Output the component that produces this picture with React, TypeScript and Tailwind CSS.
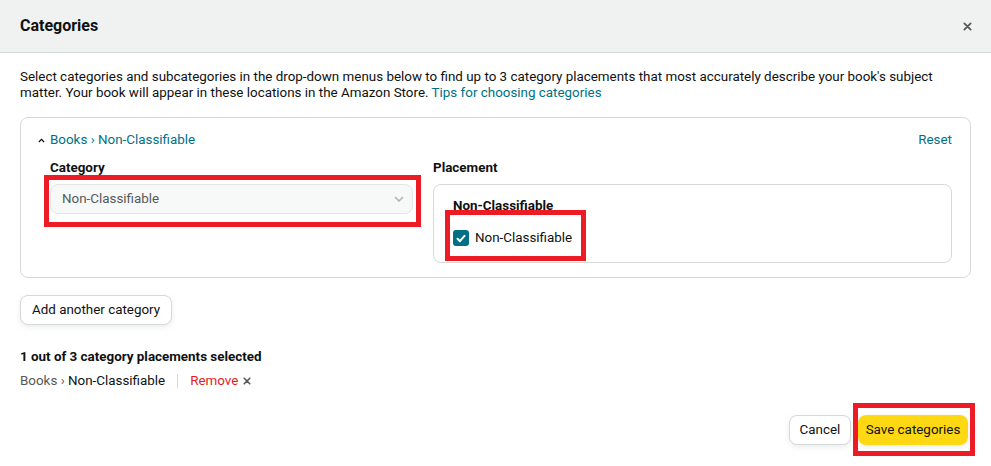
import React from 'react';

function RedBox({ className }: { className: string }) {
  return <div className={`pointer-events-none absolute border-[5px] border-[#ed1c24] ${className}`} />;
}

function XIcon({ className }: { className: string }) {
  return (
    <svg className={className} viewBox="0 0 10 10" fill="none" stroke="currentColor" strokeWidth={2} strokeLinecap="round">
      <path d="M1.5 1.5l7 7M8.5 1.5l-7 7" />
    </svg>
  );
}

export default function App() {
  return (
    <div
      className="relative w-[991px] h-[466px] overflow-hidden bg-white text-[13.4px] leading-4 text-[#0f1111]"
      style={{ fontFamily: 'Roboto, "Liberation Sans", sans-serif' }}
    >
      {/* header */}
      <div className="flex h-[53px] items-center justify-between border-b border-[#d5d9d9] bg-[#f0f2f2] pl-5 pr-[19px]">
        <h1 className="text-[16px] font-bold">Categories</h1>
        <XIcon className="h-[9px] w-[9px] text-[#565959]" />
      </div>

      <div className="px-5 pt-4">
        <p className="text-[#0f1111]">
          Select categories and subcategories in the drop-down menus below to find up to 3 category placements that most accurately describe your book's subject matter. Your book will appear in these locations in the Amazon Store.{' '}
          <a className="text-[#007185]">Tips for choosing categories</a>
        </p>

        {/* category card */}
        <div className="mt-4 rounded-lg border border-[#d5d9d9] pl-[17px] pr-[18px] pt-[14px] pb-[14px]">
          <div className="flex items-center justify-between">
            <div className="flex items-center gap-[5px] text-[#007185]">
              <svg className="h-[5px] w-[7px] text-[#0f1111]" viewBox="0 0 8 5" fill="none" stroke="currentColor" strokeWidth={1.4}>
                <path d="M1 4.2L4 1.2l3 3" />
              </svg>
              <span>Books › Non-Classifiable</span>
            </div>
            <span className="text-[#007185]">Reset</span>
          </div>

          <div className="mt-3 flex gap-5 pl-[12px]">
            <div className="w-[363px]">
              <div className="font-bold">Category</div>
              <div className="mt-2 flex h-[30px] items-center justify-between rounded-lg border border-[#e3e6e6] bg-[#f7f9f9] pl-[11px] pr-[8px] text-[#565959]">
                <span>Non-Classifiable</span>
                <svg className="h-[6px] w-[10px] text-[#aab7b8]" viewBox="0 0 10 6" fill="none" stroke="currentColor" strokeWidth={1.6}>
                  <path d="M1 1l4 4 4-4" />
                </svg>
              </div>
            </div>
            <div className="flex-1">
              <div className="font-bold">Placement</div>
              <div className="mt-2 h-[79px] rounded-lg border border-[#d5d9d9] pl-[19px] pt-[13px]">
                <div className="font-bold">Non-Classifiable</div>
                <div className="mt-4 flex items-center gap-[6px]">
                  <span className="flex h-4 w-4 items-center justify-center rounded-[3px] bg-[#007185]">
                    <svg className="h-[9px] w-[10px]" viewBox="0 0 10 9" fill="none" stroke="white" strokeWidth={2} strokeLinecap="round" strokeLinejoin="round">
                      <path d="M1.5 4.8l2.4 2.4L8.5 1.8" />
                    </svg>
                  </span>
                  <span>Non-Classifiable</span>
                </div>
              </div>
            </div>
          </div>
        </div>

        <button className="mt-[17px] h-[30px] rounded-lg border border-[#d5d9d9] bg-white px-[11px] shadow-[0_2px_5px_rgba(213,217,217,0.5)]">
          Add another category
        </button>

        <div className="mt-6 font-bold">1 out of 3 category placements selected</div>
        <div className="mt-2 flex items-center">
          <span className="text-[#565959]">Books ›&nbsp;</span>
          <span>Non-Classifiable</span>
          <span className="mx-[12px] h-[14px] w-px bg-[#d5d9d9]" />
          <span className="text-[#e21c24]">Remove</span>
          <XIcon className="ml-[5px] h-[8px] w-[8px] text-[#565959]" />
        </div>

        <div className="mt-[26px] flex justify-end gap-[7px] pr-[3px]">
          <button className="h-[30px] w-[62px] rounded-lg border border-[#d5d9d9] bg-white shadow-[0_2px_5px_rgba(213,217,217,0.5)]">
            Cancel
          </button>
          <button className="h-[30px] w-[110px] rounded-lg bg-[#ffd814] shadow-[0_2px_5px_rgba(213,217,217,0.5)]">
            Save categories
          </button>
        </div>
      </div>

      <RedBox className="left-[44px] top-[175px] h-[52px] w-[377px]" />
      <RedBox className="left-[445px] top-[210px] h-[51px] w-[141px]" />
      <RedBox className="left-[853px] top-[403px] h-[53px] w-[122px]" />
    </div>
  );
}
